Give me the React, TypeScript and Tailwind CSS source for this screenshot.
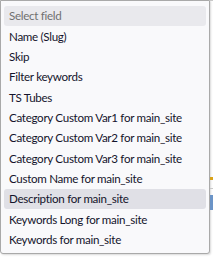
const FIELDS = [
  "Name (Slug)",
  "Skip",
  "Filter keywords",
  "TS Tubes",
  "Category Custom Var1 for main_site",
  "Category Custom Var2 for main_site",
  "Category Custom Var3 for main_site",
  "Custom Name for main_site",
  "Description for main_site",
  "Keywords Long for main_site",
  "Keywords for main_site",
];

export default function App() {
  const hovered = "Description for main_site";

  return (
    <div
      className="flex h-[258px] w-[213px] bg-white text-[11.6px] tracking-[-0.3px]"
      style={{ fontFamily: 'Lato, "Noto Sans", sans-serif' }}
    >
      <div className="flex h-[254px] w-[210px] flex-col rounded-b-[3px] border border-[#a9a9a9] bg-[#f9f9fb] px-[3px] pt-[5px] shadow-[1px_1px_2px_rgba(0,0,0,0.15)]">
        <div className="flex h-[20.33px] items-center whitespace-nowrap rounded-[3px] bg-[#e9e9ed] px-[5px] text-[#707070]">
          Select field
        </div>
        {FIELDS.map((f) => (
          <div
            key={f}
            className={
              "flex h-[20.33px] items-center whitespace-nowrap rounded-[3px] px-[5px] text-[#14142b] " +
              (f === hovered ? "bg-[#e0e0e6]" : "")
            }
          >
            {f}
          </div>
        ))}
      </div>
      <div className="flex flex-1 flex-col">
        <div className="h-px bg-[#c8c8c8]" />
        <div className="h-[176px]" />
        <div className="h-[3px] bg-[#d9a31a]" />
        <div className="h-[8px]" />
        <div className="h-px bg-[#c8c8c8]" />
        <div className="h-[6px]" />
        <div className="h-[15px] bg-[#6b94c7]" />
      </div>
    </div>
  );
}
